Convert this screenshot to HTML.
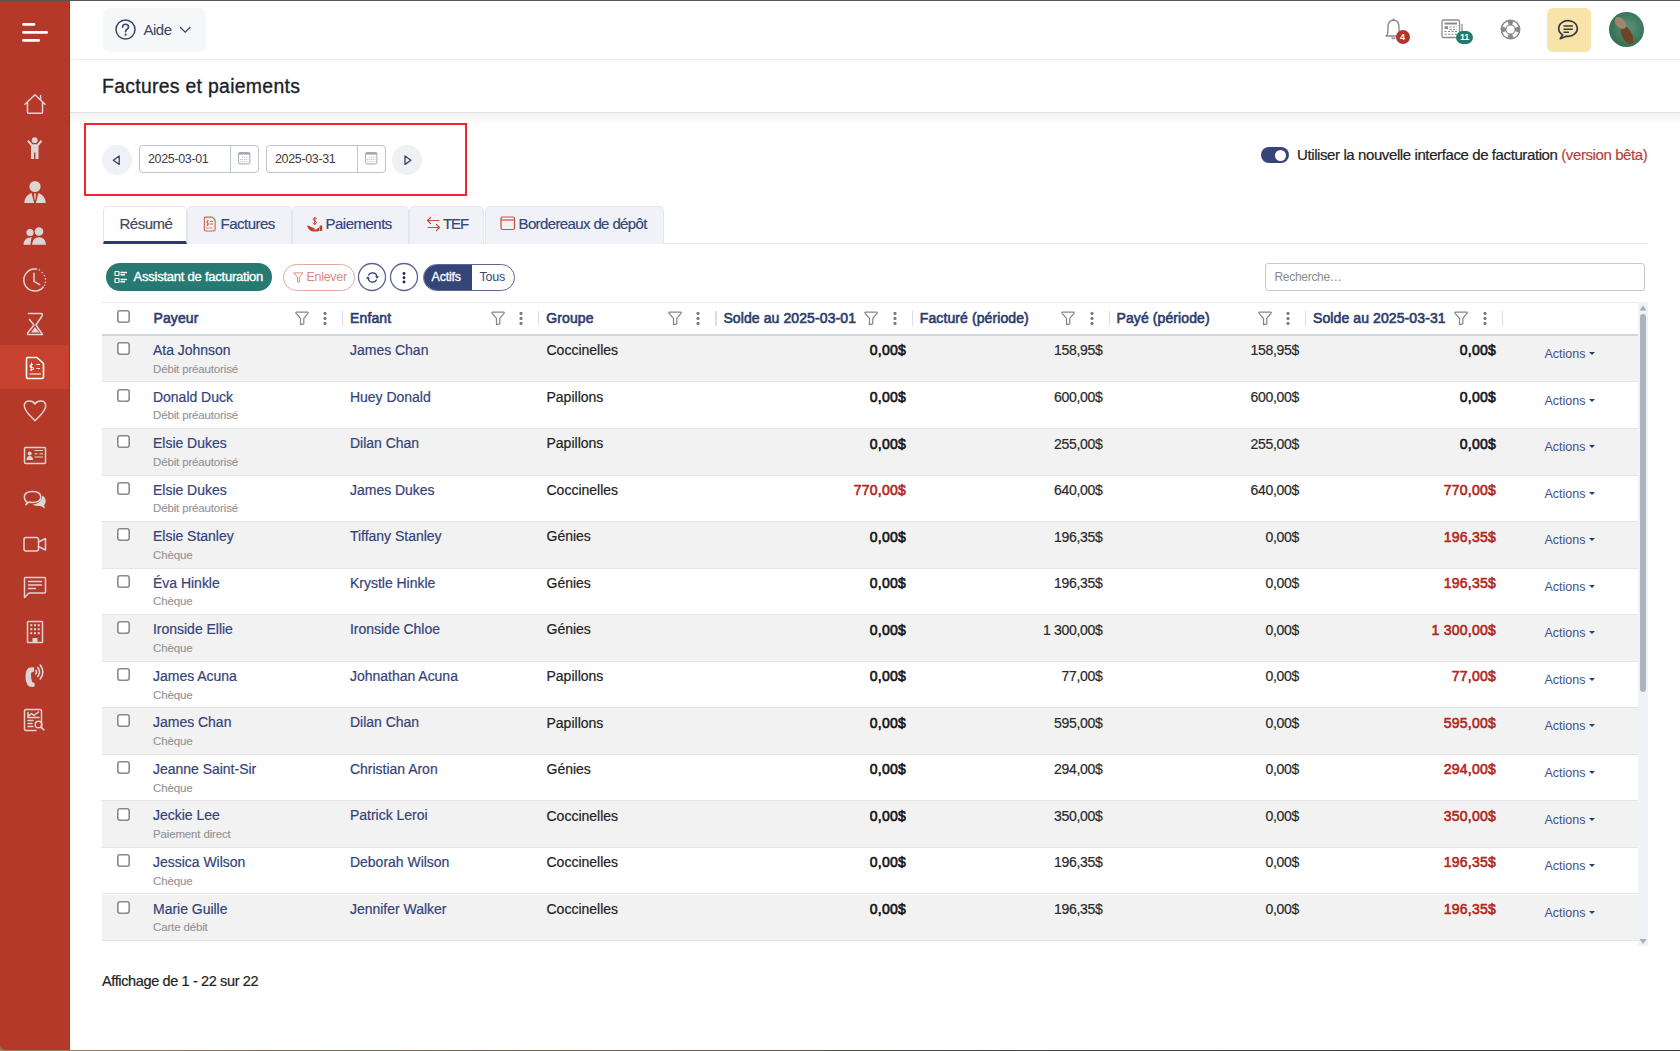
<!DOCTYPE html>
<html><head><meta charset="utf-8">
<style>
*{box-sizing:border-box;margin:0;padding:0}
html,body{width:1680px;height:1051px;overflow:hidden;background:#fff;font-family:"Liberation Sans",sans-serif;color:#222}
#topline{position:absolute;left:0;top:0;width:1680px;height:1px;background:#555756;z-index:10}
#botline{position:absolute;left:0;top:1050px;width:1680px;height:1px;background:linear-gradient(90deg,#a08060,#7a6850 20%,#4a4a48 60%,#3a3a3a);z-index:10}
#sidebar{position:absolute;left:0;top:0;width:70px;height:1050px;background:#b43928;border-right:1px solid #a9301f;border-bottom-left-radius:5px}
#corner{position:absolute;left:0;top:1043px;width:8px;height:8px;background:#9c7a4e}
#sidebar .active{position:absolute;left:0;top:345px;width:69px;height:44px;background:#c8412e}
#header{position:absolute;left:70px;top:0;width:1610px;height:60px;border-bottom:1px solid #e9ebf0}
#aide{position:absolute;left:32.5px;top:8px;width:103px;height:44px;background:#f6f7f9;border-radius:7px}
#aide .t{position:absolute;left:41px;top:12.5px;font-size:15px;color:#3a4566;letter-spacing:-0.5px}
#titlebar{position:absolute;left:70px;top:60px;width:1610px;height:53px;border-bottom:1px solid #e1e1e1}
#title{position:absolute;left:32px;top:15.3px;font-size:19.4px;color:#1b1f2a;white-space:nowrap;-webkit-text-stroke:0.35px #1b1f2a;letter-spacing:0.3px}
#shadow{position:absolute;left:70px;top:113px;width:1610px;height:12px;background:linear-gradient(#f3f3f3,#fff)}
#redbox{position:absolute;left:84px;top:123px;width:383px;height:73px;border:2px solid #f0262f}
.navc{position:absolute;width:30px;height:30px;border-radius:15px;background:#eff1f6}
.date{position:absolute;top:145px;width:120px;height:28px;border:1px solid #bfc3ca;border-radius:4px;background:#fff}
.date .v{position:absolute;left:8px;top:6px;font-size:12.5px;color:#3d3d3d;letter-spacing:-0.35px}
.date .ic{position:absolute;left:89.5px;top:0;width:1px;height:26px;background:#bfc3ca}
#toggle{position:absolute;left:1261px;top:147px;width:28px;height:16px;border-radius:8px;background:#354578}
#toggle:after{content:"";position:absolute;left:14px;top:2.5px;width:11px;height:11px;border-radius:6px;background:#fff}
#tgtext{position:absolute;left:1297px;top:145.5px;font-size:15px;color:#222;letter-spacing:-0.4px;-webkit-text-stroke:0.2px #222;white-space:nowrap}
#tgtext span{color:#b3453a;-webkit-text-stroke:0.2px #b3453a}
.tab{position:absolute;top:205.5px;height:38px;background:#f0f2f7;border:1px solid #e3e6ec;border-bottom:none;border-radius:5px 5px 0 0;font-size:15px;color:#35477a;white-space:nowrap;letter-spacing:-0.5px;-webkit-text-stroke:0.2px currentColor}
.tab .t{position:absolute;top:8.5px}
#tabline{position:absolute;left:186px;top:243px;width:1462px;height:1px;background:#e3e6ec}
#greenbtn{position:absolute;left:105.5px;top:263px;width:166.5px;height:28px;border-radius:14px;background:#277a72;color:#fff;font-size:13px;letter-spacing:-0.23px;-webkit-text-stroke:0.35px #fff;white-space:nowrap}
#enlever{position:absolute;left:282.5px;top:263.5px;width:72.5px;height:27.5px;border-radius:14px;border:1px solid #e3aaa2;color:#d98a80;font-size:12.5px;letter-spacing:-0.3px}
.circ{position:absolute;top:263px;width:28px;height:28px}
#seg{position:absolute;left:422.5px;top:263.5px;width:92px;height:27.5px;border-radius:14px;border:1px solid #5a6592;overflow:hidden;font-size:12.5px}
#seg .a{position:absolute;left:0;top:0;width:48.5px;height:100%;background:#354578;color:#fff}
#search{position:absolute;left:1265px;top:263px;width:380px;height:28px;border:1px solid #c5c9d0;border-radius:3px}
#search .p{position:absolute;left:8.5px;top:6.2px;font-size:12px;color:#8a8a8a;letter-spacing:-0.3px}
#table{position:absolute;left:102px;top:302px;width:1536px;height:639px;overflow:hidden}
#thead{position:absolute;left:0;top:0;width:1536px;height:34px;background:#fff;border-top:1px solid #ececec;border-bottom:2px solid #d2d5db}
.th{position:absolute;top:310.3px;font-size:14px;color:#2d3c6e;letter-spacing:0.1px;-webkit-text-stroke:0.6px #2d3c6e;white-space:nowrap}
.fn,.dt{position:absolute}
.sep{position:absolute;top:311.3px;width:1.2px;height:14.5px;background:#d9dee6}
.row{position:absolute;left:0;width:1536px;height:46.55px;border-bottom:1px solid #e4e5e8}
.cb{position:absolute;width:13px;height:13px;border-radius:3px;background:#fff;box-shadow:inset 0 0 0 1.6px #8a8a8a}
.nm{position:absolute;top:6.1px;font-size:14px;color:#35437a;letter-spacing:-0.02px;-webkit-text-stroke:0.2px #35437a;white-space:nowrap}
.sub{position:absolute;left:51px;top:26.8px;font-size:11.5px;color:#959595;letter-spacing:-0.15px;-webkit-text-stroke:0.15px #959595;white-space:nowrap}
.tx{position:absolute;top:6.3px;font-size:14px;color:#222;letter-spacing:0px;-webkit-text-stroke:0.2px #222;white-space:nowrap}
.num{position:absolute;top:6.5px;font-size:14px;color:#2a2a2a;letter-spacing:-0.3px;-webkit-text-stroke:0.2px #2a2a2a;white-space:nowrap}
.num.b{color:#151515;letter-spacing:0.25px;-webkit-text-stroke:0.6px #151515}
.num.b.red{color:#b0291d;-webkit-text-stroke:0.6px #b0291d}
.act{position:absolute;left:1442.5px;top:11.2px;font-size:12.5px;color:#42518a;white-space:nowrap}
.caret{display:inline-block;margin-left:3px;vertical-align:3px;width:0;height:0;border-left:3px solid transparent;border-right:3px solid transparent;border-top:3px solid #2d3c6e}
#sbtrack{position:absolute;left:1638px;top:302px;width:10px;height:644px;background:#f0f2f6}
#sbthumb{position:absolute;left:1640px;top:314px;width:6px;height:378px;border-radius:3px;background:#adb3bc}
#footer{position:absolute;left:102px;top:973px;font-size:14.5px;color:#222;letter-spacing:-0.37px;-webkit-text-stroke:0.2px #222;white-space:nowrap}
</style></head>
<body>
<div id="topline"></div>
<div id="botline"></div>
<div id="corner"></div>
<div id="sidebar"><div class="active"></div><svg width="70" height="1051" viewBox="0 0 70 1051" style="position:absolute;left:0;top:0">
<g stroke="#fff" stroke-width="2.7" stroke-linecap="round">
<line x1="23.5" y1="24.4" x2="34" y2="24.4"/><line x1="23.5" y1="32.4" x2="46.7" y2="32.4"/><line x1="23.5" y1="40.4" x2="38.7" y2="40.4"/>
</g>
<g fill="none" stroke="#ddd5d3" stroke-width="1.5" stroke-linecap="round" stroke-linejoin="round">
<!-- home -->
<path d="M25 104.3 L35 94.8 L45 104.3 M27.5 102 V112.2 Q27.5 113.3 28.6 113.3 H41.4 Q42.5 113.3 42.5 112.2 V102 M40.6 99.5 V95.5"/>
<!-- clock -->
<path d="M36.4 269.1 A11 11 0 1 0 43.3 287"/>
<path d="M34 273.2 V281.3 L39.7 284.6"/>
<!-- hourglass -->
<path d="M28.5 313.5 H41 Q43 313.5 42 316 L36 325 L42.5 334.5 H28 Q27 334.5 28 332.5 L34 325 L29.5 319.5"/>
<!-- heart -->
<path d="M35 404 C32.5 400 24.3 399.5 24.3 406 C24.3 411 30 415.5 35 420.8 C40 415.5 45.7 411 45.7 406 C45.7 399.5 37.5 400 35 404Z"/>
<!-- id card -->
<rect x="24.5" y="447.5" width="21" height="16" rx="1"/>
<!-- chat bubbles -->
<path d="M27.5 502.5 Q24.3 500.5 24.3 497 Q24.3 491.5 32.5 491.5 Q40.8 491.5 40.8 497 Q40.8 502.5 32.5 502.5 Q30.5 502.5 29 502 L25.8 504.8 Z"/>
<!-- video -->
<rect x="24" y="537.5" width="14.5" height="13.5" rx="2"/>
<path d="M38.5 542 L45.5 538.5 V550 L38.5 546.5"/>
<!-- message -->
<path d="M24.5 597.5 V578.5 Q24.5 577.5 25.5 577.5 H44.5 Q45.5 577.5 45.5 578.5 V592 Q45.5 593 44.5 593 H29 Z"/>
<path d="M28.5 581.5 H41.5 M28.5 585 H41.5 M28.5 588.5 H35.5"/>
<!-- building -->
<rect x="27.5" y="621.5" width="15" height="21" rx="0.8"/>
<!-- report -->
<path d="M41.5 728 V711 Q41.5 709.5 40 709.5 H26 Q24.5 709.5 24.5 711 V729 Q24.5 730.5 26 730.5 H36"/>
<path d="M28 712.5 V717.5 H39 M28.5 716 L31.5 713.5 L34 715.5 L38.5 712" />
<path d="M28 720.5 H33 M28 723.5 H32 M28 726.5 H33"/>
<circle cx="38.5" cy="724.5" r="3.3"/><path d="M41 727 L44 730"/>
<!-- phone waves -->
<path d="M35.8 670.3 Q37.3 672 35.8 673.8 M37.8 667.5 Q41.3 672 37.8 676.5 M40.2 665 Q45.5 672 40.2 679" stroke-width="1.6"/>
</g>
<g fill="#ddd5d3">
<!-- child -->
<circle cx="34.7" cy="140.2" r="2.9"/>
<path d="M27.2 141.5 L28.6 140 L32.5 144.3 H37 L40.8 140 L42.2 141.5 L38.5 146 V159 H35.4 V152.5 H34 V159 H31 V146 Z"/>
<!-- person tie -->
<circle cx="35" cy="186.5" r="5.6"/>
<path d="M31.5 193 L34.2 203 H24.3 Q24.8 195.5 31.5 193Z M38.5 193 L35.8 203 H45.7 Q45.2 195.5 38.5 193Z M34 193.5 H36 L35.5 199 L35 200.5 L34.5 199Z"/>
<!-- two people -->
<circle cx="30" cy="232.5" r="3.6"/><circle cx="39" cy="231.5" r="4.3"/>
<path d="M23.5 244.8 Q23.8 237.8 30.5 237.5 L32 237.6 Q30.6 239.5 30.6 244.8Z M32 244.8 Q32.5 237.3 39 237.3 Q45.5 237.3 46 244.8Z"/>
<!-- clock dots -->
<circle cx="39.3" cy="270" r="0.8"/><circle cx="42.1" cy="272.6" r="0.8"/><circle cx="44.3" cy="275.6" r="0.8"/><circle cx="45.5" cy="278.9" r="0.8"/><circle cx="45.5" cy="282.2" r="0.8"/><circle cx="44.6" cy="285.2" r="0.8"/>
<!-- hourglass sand -->
<path d="M31 332.5 L35 327 L39.5 332.5Z"/>
<!-- id person -->
<circle cx="29.7" cy="453.5" r="2"/><path d="M26.5 460 Q26.5 456 29.7 456 Q33 456 33 460Z"/>
<!-- second bubble -->
<path d="M42.5 495.5 Q46.5 498.5 45.5 502.5 Q45 504.5 44 505 L45 508.5 L40.5 506 Q36 506.5 32.5 504.5 Q41.5 504 42.5 495.5Z"/>
<!-- phone -->
<path d="M28.5 668 Q31.5 666.8 33.5 667.3 Q34.3 667.6 34.2 669 L34 671.3 Q33.7 672.3 31.3 672.4 Q30.7 675 31.2 678 Q31.8 681.5 32.6 682.5 Q34.5 682.3 34.6 683.4 L34.6 686 Q34.4 687 33 687 Q29 687.3 27.5 685 Q25.3 681.5 25.5 676 Q25.8 670 28.5 668Z"/>
<!-- building windows -->
<g>
<rect x="30.3" y="624.2" width="2" height="2"/><rect x="34" y="624.2" width="2" height="2"/><rect x="37.7" y="624.2" width="2" height="2"/>
<rect x="30.3" y="628.2" width="2" height="2"/><rect x="34" y="628.2" width="2" height="2"/><rect x="37.7" y="628.2" width="2" height="2"/>
<rect x="30.3" y="632.2" width="2" height="2"/><rect x="34" y="632.2" width="2" height="2"/><rect x="37.7" y="632.2" width="2" height="2"/>
<rect x="32.5" y="638" width="5" height="4.5"/>
</g>
</g>
<g stroke="#ddd5d3" stroke-width="1" fill="none"><path d="M34.5 450.5 H43 M34.5 453.8 H37.5 M39.5 453.8 H43 M34.5 457 H43"/></g>
<!-- active invoice (white) -->
<g fill="none" stroke="#fff" stroke-width="1.6" stroke-linejoin="round">
<path d="M27.5 357.5 H37 L43.5 363.5 V377 Q43.5 378.5 42 378.5 H28.5 Q26.5 378.5 26.5 377 V359 Q26.5 357.5 28 357.5Z"/>
</g>
<g stroke="#fff" stroke-width="1.2"><path d="M36.5 364.5 H40 M36.5 368.5 H40 M29.5 374 H41"/><path d="M31.5 362.5 V371" stroke-width="0.9"/></g>
<path d="M33 364.5 Q30 364.5 30 366.2 Q30 367.5 32 367.5 Q34 367.7 33.5 369 Q33 370 30 369.8" fill="none" stroke="#fff" stroke-width="1.1"/>
</svg></div>

<div id="header">
  <div id="aide">
    <svg style="position:absolute;left:12.5px;top:10.5px" width="22" height="22" viewBox="0 0 22 22"><circle cx="10.5" cy="10.5" r="9.5" fill="none" stroke="#3b4668" stroke-width="1.5"/><path d="M7.6 8.3 Q7.6 5.2 10.6 5.2 Q13.5 5.2 13.5 7.9 Q13.5 9.4 11.7 10.5 Q10.6 11.3 10.6 12.7" fill="none" stroke="#3b4668" stroke-width="1.6" stroke-linecap="round"/><circle cx="10.6" cy="15.7" r="1.1" fill="#3b4668"/></svg>
    <div class="t">Aide</div>
    <svg style="position:absolute;left:76.5px;top:18px" width="13" height="8" viewBox="0 0 13 8"><path d="M1 1 L6.2 6.2 L11.4 1" fill="none" stroke="#3b4668" stroke-width="1.3"/></svg>
  </div>
  <!-- bell -->
  <svg style="position:absolute;left:1313px;top:17px" width="22" height="24" viewBox="0 0 22 24"><path d="M3 19 Q5 17.5 5 14 V10 Q5 3.5 10.5 3 Q16 3.5 16 10 V14 Q16 17.5 18 19 Z" fill="none" stroke="#8c8c8c" stroke-width="1.4" stroke-linejoin="round"/><path d="M8.5 20.5 Q10.5 22.5 12.5 20.5" fill="none" stroke="#8c8c8c" stroke-width="1.4"/><circle cx="10.5" cy="2.5" r="1" fill="#8c8c8c"/></svg>
  <div style="position:absolute;left:1325.5px;top:30px;width:14px;height:14px;border-radius:7px;background:#b5342a;color:#fff;font-size:9px;font-weight:bold;text-align:center;line-height:14px">4</div>
  <!-- calendar/news -->
  <svg style="position:absolute;left:1371px;top:19px" width="24" height="21" viewBox="0 0 24 21"><rect x="1" y="1" width="17.5" height="17.5" rx="1.5" fill="none" stroke="#8c8c8c" stroke-width="1.3"/><rect x="3.5" y="3.5" width="12.5" height="2" fill="#8c8c8c"/><rect x="3.5" y="7.3" width="3.5" height="2.8" fill="#8c8c8c"/><path d="M3.5 12.5 H16 M3.5 15.3 H16 M8.5 8 H16 M8.5 10.5 H16" stroke="#8c8c8c" stroke-width="1" stroke-dasharray="2.2 1.3"/><path d="M21 5 V18" stroke="#8c8c8c" stroke-width="1.3"/></svg>
  <div style="position:absolute;left:1386px;top:30.5px;width:17px;height:13px;border-radius:7px;background:#237a6e;color:#fff;font-size:9px;font-weight:bold;text-align:center;line-height:13px;letter-spacing:-0.3px">11</div>
  <!-- lifebuoy -->
  <svg style="position:absolute;left:1429.5px;top:18.5px" width="21" height="21" viewBox="0 0 21 21"><circle cx="10.5" cy="10.5" r="10" fill="#8a8a8a"/><circle cx="10.5" cy="10.5" r="4" fill="#fff"/><path fill="#fff" d="M18.49 13.41 A8.5 8.5 0 0 1 13.41 18.49 L12.28 15.39 A5.2 5.2 0 0 0 15.39 12.28Z M7.59 18.49 A8.5 8.5 0 0 1 2.51 13.41 L5.61 12.28 A5.2 5.2 0 0 0 8.72 15.39Z M2.51 7.59 A8.5 8.5 0 0 1 7.59 2.51 L8.72 5.61 A5.2 5.2 0 0 0 5.61 8.72Z M13.41 2.51 A8.5 8.5 0 0 1 18.49 7.59 L15.39 8.72 A5.2 5.2 0 0 0 12.28 5.61Z"/></svg>
  <!-- chat highlighted -->
  <div style="position:absolute;left:1476.5px;top:8px;width:44px;height:44px;border-radius:6px;background:#f8e3a9"></div>
  <svg style="position:absolute;left:1487px;top:18px" width="23" height="23" viewBox="0 0 23 23"><path d="M9.39 18.18 L3.2 20.6 L5.67 16.89 A9.3 7.8 0 1 1 9.39 18.18Z" fill="none" stroke="#353a4a" stroke-width="1.7" stroke-linejoin="round"/><path d="M6.5 8 H15.8 M6.5 11.2 H15.8 M6.5 14.2 H12" stroke="#353a4a" stroke-width="1.5"/></svg>
  <!-- avatar -->
  <div style="position:absolute;left:1538.5px;top:11.6px;width:35px;height:35px;border-radius:18px;background:radial-gradient(circle at 55% 45%,#5a9278 0%,#3f7a5e 50%,#2a5e44 100%);overflow:hidden">
    <div style="position:absolute;left:13px;top:13px;width:10px;height:20px;border-radius:50%;background:#6e4426;transform:rotate(-28deg)"></div>
    <div style="position:absolute;left:7px;top:4px;width:9px;height:14px;border-radius:50%;background:#a08470;transform:rotate(-40deg)"></div>
</div>
</div>

<div id="titlebar"><div id="title">Factures et paiements</div></div>
<div id="shadow"></div>

<div id="redbox"></div>
<div class="navc" style="left:102px;top:144.5px"><svg style="position:absolute;left:10px;top:10px" width="10" height="10" viewBox="0 0 10 10"><path d="M7.2 1 V9.4 L1.3 5.2 Z" fill="none" stroke="#39425e" stroke-width="1.3" stroke-linejoin="round"/></svg></div>
<div class="date" style="left:139px"><div class="v">2025-03-01</div><div class="ic"></div>
 <svg style="position:absolute;left:97.5px;top:5.8px" width="13" height="13" viewBox="0 0 13 13"><rect x="0.6" y="0.6" width="11.3" height="11.3" rx="1.2" fill="none" stroke="#a3a8b0" stroke-width="1"/><rect x="0.6" y="0.6" width="11.3" height="2" fill="#a3a8b0"/><path d="M4 5.3 H10.5 M2.2 7.5 H10.5 M2.2 9.7 H10.5" stroke="#b9bdc4" stroke-width="1" stroke-dasharray="1.1 0.9"/></svg></div>
<div class="date" style="left:266px"><div class="v">2025-03-31</div><div class="ic"></div>
 <svg style="position:absolute;left:97.5px;top:5.8px" width="13" height="13" viewBox="0 0 13 13"><rect x="0.6" y="0.6" width="11.3" height="11.3" rx="1.2" fill="none" stroke="#a3a8b0" stroke-width="1"/><rect x="0.6" y="0.6" width="11.3" height="2" fill="#a3a8b0"/><path d="M4 5.3 H10.5 M2.2 7.5 H10.5 M2.2 9.7 H10.5" stroke="#b9bdc4" stroke-width="1" stroke-dasharray="1.1 0.9"/></svg></div>
<div class="navc" style="left:392px;top:144.5px"><svg style="position:absolute;left:11px;top:10px" width="10" height="10" viewBox="0 0 10 10"><path d="M2 1 V9.4 L7.9 5.2 Z" fill="none" stroke="#39425e" stroke-width="1.3" stroke-linejoin="round"/></svg></div>

<div id="toggle"></div>
<div id="tgtext">Utiliser la nouvelle interface de facturation <span>(version bêta)</span></div>

<div id="tabline"></div>
<div class="tab" style="left:102.5px;width:84px;background:#fff;color:#444a5a;border-bottom:3px solid #2d3c6e;height:38px"><div class="t" style="left:16px">Résumé</div></div>
<div class="tab" style="left:186.5px;width:105px"><svg style="position:absolute;left:14.6px;top:9.2px" width="15" height="17" viewBox="0 0 15 17"><path d="M3.8 1.1 H10.2 L13.1 4 V13.5 Q13.1 15 11.6 15 H3.8 Q2.3 15 2.3 13.5 V2.6 Q2.3 1.1 3.8 1.1Z" fill="none" stroke="#cf5d4c" stroke-width="1.1" stroke-linejoin="round"/><path d="M8 5.3 H11 M8 8 H11" stroke="#cf5d4c" stroke-width="1"/><path d="M3.8 12 H11" stroke="#cf5d4c" stroke-width="0.9" stroke-dasharray="1 0.4"/><path d="M6.6 5 Q4.6 4.7 4.6 6.1 Q4.6 7 5.8 7.2 Q6.9 7.5 6.8 8.4 Q6.6 9.5 4.5 9.2 M5.7 3.9 V10.2" fill="none" stroke="#cf5d4c" stroke-width="0.9"/></svg><div class="t" style="left:33px">Factures</div></div>
<div class="tab" style="left:291.5px;width:117.5px"><svg style="position:absolute;left:13.8px;top:8.8px" width="17" height="17" viewBox="0 0 17 17"><path d="M10.8 3.8 Q10 3 8.7 3.1 Q7.2 3.3 7.3 4.6 Q7.4 5.7 8.8 6 Q10.5 6.3 10.5 7.6 Q10.4 9 8.5 8.9 Q7.3 8.8 6.8 8 M8.8 2 V10" fill="none" stroke="#c23a28" stroke-width="1"/><path d="M1 10.6 Q3.5 10.9 5.2 12 L8.3 13.2 Q9 13.7 8.3 14.2 L6.6 14 L9.3 14.7 Q11.3 14 13.2 12.3 V16 Q9.5 17 5.8 16.3 Q2.6 15.2 1 10.6Z" fill="#c23a28"/><path d="M13.6 10.5 H16.2 V15.8 H13.6Z" fill="#c23a28"/></svg><div class="t" style="left:33px">Paiements</div></div>
<div class="tab" style="left:409px;width:75px"><svg style="position:absolute;left:16px;top:9px" width="15" height="16" viewBox="0 0 15 16"><path d="M4.5 1.5 L1.5 4.5 L4.5 7.5 M1.5 4.5 H13 M10.5 8.5 L13.5 11.5 L10.5 14.5 M13.5 11.5 H2" fill="none" stroke="#c8503f" stroke-width="1.2" stroke-linecap="round" stroke-linejoin="round"/></svg><div class="t" style="left:33px;letter-spacing:-1.1px">TEF</div></div>
<div class="tab" style="left:484.5px;width:179.5px"><svg style="position:absolute;left:14.5px;top:9.8px" width="16" height="15" viewBox="0 0 16 15"><rect x="1" y="1" width="13.5" height="12.5" rx="1.5" fill="none" stroke="#c8503f" stroke-width="1.2"/><path d="M1 4 H14.5" stroke="#c8503f" stroke-width="1.2"/></svg><div class="t" style="left:33px;letter-spacing:-0.62px">Bordereaux de dépôt</div></div>

<div id="greenbtn"><svg style="position:absolute;left:8px;top:7px" width="14" height="14" viewBox="0 0 14 14"><rect x="1" y="1.5" width="4" height="4" rx="0.8" fill="none" stroke="#fff" stroke-width="1.2"/><rect x="1" y="8.5" width="4" height="4" rx="0.8" fill="none" stroke="#fff" stroke-width="1.2"/><path d="M6.5 2.5 H13 M6.5 4.8 H11 M6.5 9.5 H13 M6.5 11.8 H11" stroke="#fff" stroke-width="1.4"/></svg><div style="position:absolute;left:28px;top:5.5px">Assistant de facturation</div></div>
<div id="enlever"><svg style="position:absolute;left:9.2px;top:7px" width="11" height="12" viewBox="0 0 11 12"><path d="M0.8 0.9 H10 L6.3 5.5 V10.6 L4.5 9.6 V5.5 Z" fill="none" stroke="#d98a80" stroke-width="1" stroke-linejoin="round"/></svg><div style="position:absolute;left:23px;top:5.5px">Enlever</div></div>
<div class="circ" style="left:358.4px"><svg style="position:absolute;left:-1px;top:-1px" width="30" height="30" viewBox="0 0 30 30"><circle cx="15" cy="15" r="13.5" fill="none" stroke="#5a6592" stroke-width="1.3"/></svg><svg style="position:absolute;left:6.5px;top:6.8px" width="15" height="15" viewBox="0 0 15 15"><path d="M3.33 5.56 A4.6 4.6 0 0 1 11.94 6.31 M11.67 9.44 A4.6 4.6 0 0 1 3.06 8.69" fill="none" stroke="#2d3c6e" stroke-width="1.2"/><path d="M10.06 6.26 L14.06 6.26 L12.06 8.76Z M0.94 8.74 L4.94 8.74 L2.94 6.24Z" fill="#2d3c6e"/></svg></div>
<div class="circ" style="left:390.3px"><svg style="position:absolute;left:-1px;top:-1px" width="30" height="30" viewBox="0 0 30 30"><circle cx="15" cy="15" r="13.5" fill="none" stroke="#5a6592" stroke-width="1.3"/></svg><svg style="position:absolute;left:11px;top:6.5px" width="6" height="15" viewBox="0 0 6 15"><circle cx="3" cy="3.5" r="1.45" fill="#1f2b5e"/><circle cx="3" cy="7.8" r="1.45" fill="#1f2b5e"/><circle cx="3" cy="12" r="1.45" fill="#1f2b5e"/></svg></div>
<div id="seg"><div class="a"><div style="position:absolute;left:8px;top:5.5px;letter-spacing:-0.2px;-webkit-text-stroke:0.3px #fff">Actifs</div></div><div style="position:absolute;left:56px;top:5.5px;color:#35477a;letter-spacing:-0.2px">Tous</div></div>
<div id="search"><div class="p">Recherche…</div></div>

<div id="table">
<div class="row" style="top:33.90px;background:#f2f2f2">
<div class="cb" style="left:14.8px;top:6.2px"></div>
<div class="nm" style="left:51px">Ata Johnson</div>
<div class="sub">Débit préautorisé</div>
<div class="nm" style="left:248px">James Chan</div>
<div class="tx" style="left:444.5px">Coccinelles</div>
<div class="num b" style="right:732px">0,00$</div>
<div class="num" style="right:535.5px">158,95$</div>
<div class="num" style="right:339px">158,95$</div>
<div class="num b" style="right:142px">0,00$</div>
<div class="act">Actions<span class="caret"></span></div>
</div><div class="row" style="top:80.45px;background:#ffffff">
<div class="cb" style="left:14.8px;top:6.2px"></div>
<div class="nm" style="left:51px">Donald Duck</div>
<div class="sub">Débit préautorisé</div>
<div class="nm" style="left:248px">Huey Donald</div>
<div class="tx" style="left:444.5px">Papillons</div>
<div class="num b" style="right:732px">0,00$</div>
<div class="num" style="right:535.5px">600,00$</div>
<div class="num" style="right:339px">600,00$</div>
<div class="num b" style="right:142px">0,00$</div>
<div class="act">Actions<span class="caret"></span></div>
</div><div class="row" style="top:127.00px;background:#f2f2f2">
<div class="cb" style="left:14.8px;top:6.2px"></div>
<div class="nm" style="left:51px">Elsie Dukes</div>
<div class="sub">Débit préautorisé</div>
<div class="nm" style="left:248px">Dilan Chan</div>
<div class="tx" style="left:444.5px">Papillons</div>
<div class="num b" style="right:732px">0,00$</div>
<div class="num" style="right:535.5px">255,00$</div>
<div class="num" style="right:339px">255,00$</div>
<div class="num b" style="right:142px">0,00$</div>
<div class="act">Actions<span class="caret"></span></div>
</div><div class="row" style="top:173.55px;background:#ffffff">
<div class="cb" style="left:14.8px;top:6.2px"></div>
<div class="nm" style="left:51px">Elsie Dukes</div>
<div class="sub">Débit préautorisé</div>
<div class="nm" style="left:248px">James Dukes</div>
<div class="tx" style="left:444.5px">Coccinelles</div>
<div class="num b red" style="right:732px">770,00$</div>
<div class="num" style="right:535.5px">640,00$</div>
<div class="num" style="right:339px">640,00$</div>
<div class="num b red" style="right:142px">770,00$</div>
<div class="act">Actions<span class="caret"></span></div>
</div><div class="row" style="top:220.10px;background:#f2f2f2">
<div class="cb" style="left:14.8px;top:6.2px"></div>
<div class="nm" style="left:51px">Elsie Stanley</div>
<div class="sub">Chèque</div>
<div class="nm" style="left:248px">Tiffany Stanley</div>
<div class="tx" style="left:444.5px">Génies</div>
<div class="num b" style="right:732px">0,00$</div>
<div class="num" style="right:535.5px">196,35$</div>
<div class="num" style="right:339px">0,00$</div>
<div class="num b red" style="right:142px">196,35$</div>
<div class="act">Actions<span class="caret"></span></div>
</div><div class="row" style="top:266.65px;background:#ffffff">
<div class="cb" style="left:14.8px;top:6.2px"></div>
<div class="nm" style="left:51px">Éva Hinkle</div>
<div class="sub">Chèque</div>
<div class="nm" style="left:248px">Krystle Hinkle</div>
<div class="tx" style="left:444.5px">Génies</div>
<div class="num b" style="right:732px">0,00$</div>
<div class="num" style="right:535.5px">196,35$</div>
<div class="num" style="right:339px">0,00$</div>
<div class="num b red" style="right:142px">196,35$</div>
<div class="act">Actions<span class="caret"></span></div>
</div><div class="row" style="top:313.20px;background:#f2f2f2">
<div class="cb" style="left:14.8px;top:6.2px"></div>
<div class="nm" style="left:51px">Ironside Ellie</div>
<div class="sub">Chèque</div>
<div class="nm" style="left:248px">Ironside Chloe</div>
<div class="tx" style="left:444.5px">Génies</div>
<div class="num b" style="right:732px">0,00$</div>
<div class="num" style="right:535.5px">1 300,00$</div>
<div class="num" style="right:339px">0,00$</div>
<div class="num b red" style="right:142px">1 300,00$</div>
<div class="act">Actions<span class="caret"></span></div>
</div><div class="row" style="top:359.75px;background:#ffffff">
<div class="cb" style="left:14.8px;top:6.2px"></div>
<div class="nm" style="left:51px">James Acuna</div>
<div class="sub">Chèque</div>
<div class="nm" style="left:248px">Johnathan Acuna</div>
<div class="tx" style="left:444.5px">Papillons</div>
<div class="num b" style="right:732px">0,00$</div>
<div class="num" style="right:535.5px">77,00$</div>
<div class="num" style="right:339px">0,00$</div>
<div class="num b red" style="right:142px">77,00$</div>
<div class="act">Actions<span class="caret"></span></div>
</div><div class="row" style="top:406.30px;background:#f2f2f2">
<div class="cb" style="left:14.8px;top:6.2px"></div>
<div class="nm" style="left:51px">James Chan</div>
<div class="sub">Chèque</div>
<div class="nm" style="left:248px">Dilan Chan</div>
<div class="tx" style="left:444.5px">Papillons</div>
<div class="num b" style="right:732px">0,00$</div>
<div class="num" style="right:535.5px">595,00$</div>
<div class="num" style="right:339px">0,00$</div>
<div class="num b red" style="right:142px">595,00$</div>
<div class="act">Actions<span class="caret"></span></div>
</div><div class="row" style="top:452.85px;background:#ffffff">
<div class="cb" style="left:14.8px;top:6.2px"></div>
<div class="nm" style="left:51px">Jeanne Saint-Sir</div>
<div class="sub">Chèque</div>
<div class="nm" style="left:248px">Christian Aron</div>
<div class="tx" style="left:444.5px">Génies</div>
<div class="num b" style="right:732px">0,00$</div>
<div class="num" style="right:535.5px">294,00$</div>
<div class="num" style="right:339px">0,00$</div>
<div class="num b red" style="right:142px">294,00$</div>
<div class="act">Actions<span class="caret"></span></div>
</div><div class="row" style="top:499.40px;background:#f2f2f2">
<div class="cb" style="left:14.8px;top:6.2px"></div>
<div class="nm" style="left:51px">Jeckie Lee</div>
<div class="sub">Paiement direct</div>
<div class="nm" style="left:248px">Patrick Leroi</div>
<div class="tx" style="left:444.5px">Coccinelles</div>
<div class="num b" style="right:732px">0,00$</div>
<div class="num" style="right:535.5px">350,00$</div>
<div class="num" style="right:339px">0,00$</div>
<div class="num b red" style="right:142px">350,00$</div>
<div class="act">Actions<span class="caret"></span></div>
</div><div class="row" style="top:545.95px;background:#ffffff">
<div class="cb" style="left:14.8px;top:6.2px"></div>
<div class="nm" style="left:51px">Jessica Wilson</div>
<div class="sub">Chèque</div>
<div class="nm" style="left:248px">Deborah Wilson</div>
<div class="tx" style="left:444.5px">Coccinelles</div>
<div class="num b" style="right:732px">0,00$</div>
<div class="num" style="right:535.5px">196,35$</div>
<div class="num" style="right:339px">0,00$</div>
<div class="num b red" style="right:142px">196,35$</div>
<div class="act">Actions<span class="caret"></span></div>
</div><div class="row" style="top:592.50px;background:#f2f2f2">
<div class="cb" style="left:14.8px;top:6.2px"></div>
<div class="nm" style="left:51px">Marie Guille</div>
<div class="sub">Carte débit</div>
<div class="nm" style="left:248px">Jennifer Walker</div>
<div class="tx" style="left:444.5px">Coccinelles</div>
<div class="num b" style="right:732px">0,00$</div>
<div class="num" style="right:535.5px">196,35$</div>
<div class="num" style="right:339px">0,00$</div>
<div class="num b red" style="right:142px">196,35$</div>
<div class="act">Actions<span class="caret"></span></div>
</div>
</div>
<div id="thead" style="position:absolute;left:102px;top:302px"></div>
<div id="heads">
<div class="th" style="left:153.5px">Payeur</div><svg class="fn" style="left:294.6px;top:310.8px" width="15" height="15" viewBox="0 0 15 15"><path d="M1.6 1 H12.5 Q13.7 1 13 2.3 L8.8 7.3 V12.8 L5.5 13.7 V7.3 L1.1 2.3 Q0.4 1 1.6 1Z" fill="none" stroke="#878787" stroke-width="1.25" stroke-linejoin="round"/></svg><svg class="dt" style="left:322.1px;top:311px" width="6" height="15" viewBox="0 0 6 15"><circle cx="3" cy="2.4" r="1.6" fill="#7b7b7b"/><circle cx="3" cy="7.4" r="1.6" fill="#7b7b7b"/><circle cx="3" cy="12.4" r="1.6" fill="#7b7b7b"/></svg><div class="sep" style="left:342.1px"></div><div class="th" style="left:350.1px">Enfant</div><svg class="fn" style="left:490.79999999999995px;top:310.8px" width="15" height="15" viewBox="0 0 15 15"><path d="M1.6 1 H12.5 Q13.7 1 13 2.3 L8.8 7.3 V12.8 L5.5 13.7 V7.3 L1.1 2.3 Q0.4 1 1.6 1Z" fill="none" stroke="#878787" stroke-width="1.25" stroke-linejoin="round"/></svg><svg class="dt" style="left:518.3px;top:311px" width="6" height="15" viewBox="0 0 6 15"><circle cx="3" cy="2.4" r="1.6" fill="#7b7b7b"/><circle cx="3" cy="7.4" r="1.6" fill="#7b7b7b"/><circle cx="3" cy="12.4" r="1.6" fill="#7b7b7b"/></svg><div class="sep" style="left:538.3px"></div><div class="th" style="left:546.3px">Groupe</div><svg class="fn" style="left:667.9px;top:310.8px" width="15" height="15" viewBox="0 0 15 15"><path d="M1.6 1 H12.5 Q13.7 1 13 2.3 L8.8 7.3 V12.8 L5.5 13.7 V7.3 L1.1 2.3 Q0.4 1 1.6 1Z" fill="none" stroke="#878787" stroke-width="1.25" stroke-linejoin="round"/></svg><svg class="dt" style="left:695.4px;top:311px" width="6" height="15" viewBox="0 0 6 15"><circle cx="3" cy="2.4" r="1.6" fill="#7b7b7b"/><circle cx="3" cy="7.4" r="1.6" fill="#7b7b7b"/><circle cx="3" cy="12.4" r="1.6" fill="#7b7b7b"/></svg><div class="sep" style="left:715.4px"></div><div class="th" style="left:723.4px">Solde au 2025-03-01</div><svg class="fn" style="left:864.3px;top:310.8px" width="15" height="15" viewBox="0 0 15 15"><path d="M1.6 1 H12.5 Q13.7 1 13 2.3 L8.8 7.3 V12.8 L5.5 13.7 V7.3 L1.1 2.3 Q0.4 1 1.6 1Z" fill="none" stroke="#878787" stroke-width="1.25" stroke-linejoin="round"/></svg><svg class="dt" style="left:891.8px;top:311px" width="6" height="15" viewBox="0 0 6 15"><circle cx="3" cy="2.4" r="1.6" fill="#7b7b7b"/><circle cx="3" cy="7.4" r="1.6" fill="#7b7b7b"/><circle cx="3" cy="12.4" r="1.6" fill="#7b7b7b"/></svg><div class="sep" style="left:911.8px"></div><div class="th" style="left:919.8px">Facturé (période)</div><svg class="fn" style="left:1061px;top:310.8px" width="15" height="15" viewBox="0 0 15 15"><path d="M1.6 1 H12.5 Q13.7 1 13 2.3 L8.8 7.3 V12.8 L5.5 13.7 V7.3 L1.1 2.3 Q0.4 1 1.6 1Z" fill="none" stroke="#878787" stroke-width="1.25" stroke-linejoin="round"/></svg><svg class="dt" style="left:1088.5px;top:311px" width="6" height="15" viewBox="0 0 6 15"><circle cx="3" cy="2.4" r="1.6" fill="#7b7b7b"/><circle cx="3" cy="7.4" r="1.6" fill="#7b7b7b"/><circle cx="3" cy="12.4" r="1.6" fill="#7b7b7b"/></svg><div class="sep" style="left:1108.5px"></div><div class="th" style="left:1116.5px">Payé (période)</div><svg class="fn" style="left:1257.5px;top:310.8px" width="15" height="15" viewBox="0 0 15 15"><path d="M1.6 1 H12.5 Q13.7 1 13 2.3 L8.8 7.3 V12.8 L5.5 13.7 V7.3 L1.1 2.3 Q0.4 1 1.6 1Z" fill="none" stroke="#878787" stroke-width="1.25" stroke-linejoin="round"/></svg><svg class="dt" style="left:1285.0px;top:311px" width="6" height="15" viewBox="0 0 6 15"><circle cx="3" cy="2.4" r="1.6" fill="#7b7b7b"/><circle cx="3" cy="7.4" r="1.6" fill="#7b7b7b"/><circle cx="3" cy="12.4" r="1.6" fill="#7b7b7b"/></svg><div class="sep" style="left:1305.0px"></div><div class="th" style="left:1313.0px">Solde au 2025-03-31</div><svg class="fn" style="left:1454px;top:310.8px" width="15" height="15" viewBox="0 0 15 15"><path d="M1.6 1 H12.5 Q13.7 1 13 2.3 L8.8 7.3 V12.8 L5.5 13.7 V7.3 L1.1 2.3 Q0.4 1 1.6 1Z" fill="none" stroke="#878787" stroke-width="1.25" stroke-linejoin="round"/></svg><svg class="dt" style="left:1481.5px;top:311px" width="6" height="15" viewBox="0 0 6 15"><circle cx="3" cy="2.4" r="1.6" fill="#7b7b7b"/><circle cx="3" cy="7.4" r="1.6" fill="#7b7b7b"/><circle cx="3" cy="12.4" r="1.6" fill="#7b7b7b"/></svg><div class="sep" style="left:1501.5px"></div>
<div class="cb" style="position:absolute;left:116.8px;top:309.8px"></div>
</div>
<div id="sbtrack"></div>
<div id="sbthumb"></div>
<svg style="position:absolute;left:1638px;top:303px" width="10" height="9" viewBox="0 0 10 9"><path d="M1.5 7.5 L5 2.5 L8.5 7.5Z" fill="#a8aeb7"/></svg>
<svg style="position:absolute;left:1638px;top:937px" width="10" height="9" viewBox="0 0 10 9"><path d="M1.5 2 L5 7 L8.5 2Z" fill="#a8aeb7"/></svg>

<div id="footer">Affichage de 1 - 22 sur 22</div>
</body></html>
